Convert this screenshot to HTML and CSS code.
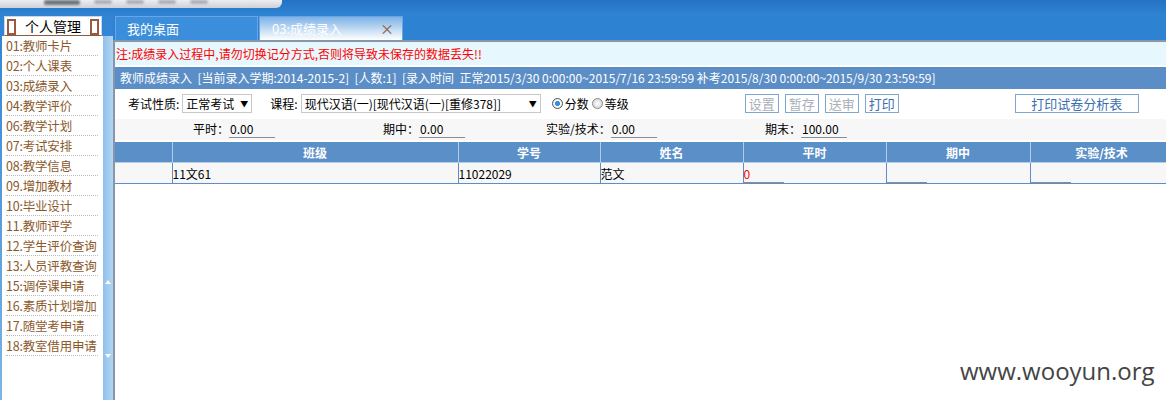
FILE: index.html
```html
<!DOCTYPE html>
<html>
<head>
<meta charset="utf-8">
<title>教师成绩录入</title>
<link rel="stylesheet" href="styles.css">
</head>
<body>
<div class="top">
  <div class="logo"><span class="blob b1"></span><span class="blob b2"></span><span class="blob b3"></span><span class="blob b4"></span><span class="blob b5"></span></div>
</div>
<div class="frame">
  <div class="side">
    <div class="side-head">
      <span class="orn orn-l"></span>个人管理<span class="orn orn-r"></span>
    </div>
    <div class="side-body">
      <ul class="menu">
        <li>01:教师卡片</li>
        <li>02:个人课表</li>
        <li>03:成绩录入</li>
        <li>04:教学评价</li>
        <li>06:教学计划</li>
        <li>07:考试安排</li>
        <li>08:教学信息</li>
        <li>09.增加教材</li>
        <li>10:毕业设计</li>
        <li>11.教师评学</li>
        <li>12.学生评价查询</li>
        <li>13:人员评教查询</li>
        <li>15:调停课申请</li>
        <li>16.素质计划增加</li>
        <li>17.随堂考申请</li>
        <li>18:教室借用申请</li>
      </ul>
      <div class="scroll">
        <span class="arr arr-up"></span>
        <span class="arr arr-down"></span>
      </div>
    </div>
  </div>
  <div class="main">
    <div class="tabs">
      <div class="tab">我的桌面</div>
      <div class="tab tab-on"><span>03:成绩录入</span><span class="close">×</span></div>
    </div>
    <div class="panel">
      <div class="notice">注:成绩录入过程中,请勿切换记分方式,否则将导致未保存的数据丢失!!</div>
      <div class="bar">教师成绩录入&nbsp; [当前录入学期:2014-2015-2]&nbsp; [人数:1]&nbsp; [录入时间&nbsp; 正常2015/3/30 0:00:00~2015/7/16 23:59:59 补考2015/8/30 0:00:00~2015/9/30 23:59:59]</div>
      <div class="form">
        <span class="lbl">考试性质:</span>
        <span class="sel sel-kind"><span class="sel-txt">正常考试</span><span class="caret">▼</span></span>
        <span class="lbl lbl-course">课程:</span>
        <span class="sel sel-course"><span class="sel-txt">现代汉语(一)[现代汉语(一)[重修378]]</span><span class="caret">▼</span></span>
        <span class="radio radio-on"></span><span class="rtxt">分数</span>
        <span class="radio"></span><span class="rtxt">等级</span>
        <span class="btns">
          <span class="btn btn-off">设置</span>
          <span class="btn btn-off">暂存</span>
          <span class="btn btn-off">送审</span>
          <span class="btn">打印</span>
        </span>
        <span class="btn btn-wide">打印试卷分析表</span>
      </div>
      <div class="weights">
        <span class="w w1">平时：<span class="val">0.00</span></span>
        <span class="w w2">期中：<span class="val">0.00</span></span>
        <span class="w w3">实验/技术：<span class="val">0.00</span></span>
        <span class="w w4">期末：<span class="val">100.00</span></span>
      </div>
      <table class="grid" cellspacing="0">
        <colgroup>
          <col class="c0"><col class="c1"><col class="c2"><col class="c3"><col class="c4"><col class="c5"><col class="c6">
        </colgroup>
        <tr>
          <th></th>
          <th>班级</th>
          <th>学号</th>
          <th>姓名</th>
          <th>平时</th>
          <th>期中</th>
          <th>实验/技术</th>
        </tr>
        <tr>
          <td></td>
          <td>11文61</td>
          <td>11022029</td>
          <td>范文</td>
          <td><span class="score red">0</span></td>
          <td><span class="score"></span></td>
          <td><span class="score"></span></td>
        </tr>
      </table>
    </div>
  </div>
</div>
<div class="mark">www.wooyun.org</div>
</body>
</html>
```
FILE: styles.css
```css
body{margin:0;padding:0;background:#2d82d2;font:12px "Noto Sans CJK SC","DejaVu Sans",sans-serif;color:#000;height:400px;overflow:hidden;}
ul{margin:0;padding:0;list-style:none;}

.top{height:16px;background:linear-gradient(#2572c4,#2f84d4);}
.logo{width:282px;height:8px;background:linear-gradient(#eceef1,#cdd0d6);border-radius:0 0 6px 0;display:flex;gap:14px;padding-left:124px;box-sizing:border-box;}
.blob{width:18px;height:4px;background:#aab0ba;border-radius:2px;filter:blur(1px);}
.b1{margin-left:-80px;width:36px;height:5px;background:#707780;}

.frame{display:flex;height:384px;}
.side{width:113px;flex:none;display:flex;flex-direction:column;background:linear-gradient(#2f84d4,#7fb4e6);}
.side-head{margin:0 11px 0 4px;height:18px;line-height:18px;background:#fff;border:1px solid #c7d8ea;border-bottom:1px solid #8a5a3a;text-align:center;font-size:14px;position:relative;}
.orn{position:absolute;top:2px;width:5px;height:12px;border:2px solid #9a5a40;}
.orn-l{left:2px;}
.orn-r{right:2px;}
.side-body{flex:1;display:flex;}
.menu{width:101px;margin-left:2px;background:#fff;}
.menu li{height:19px;line-height:19px;margin:0 5px 0 4px;border-bottom:1px dotted #bbb;color:#8b5a2b;font-size:12.5px;white-space:nowrap;letter-spacing:-0.2px;}
.scroll{width:10px;position:relative;background:linear-gradient(90deg,#8fc0ec,#b4d5f2);}
.arr{position:absolute;left:2px;width:0;height:0;border-left:3px solid transparent;border-right:3px solid transparent;}
.arr-up{top:244px;border-bottom:4px solid #fff;}
.arr-down{top:318px;border-top:4px solid #fff;}

.main{flex:1;display:flex;flex-direction:column;overflow:hidden;}
.tabs{height:24px;display:flex;gap:1px;padding-left:2px;}
.tab{width:130px;height:23px;line-height:23px;padding-left:11px;border:1px solid #69a5e6;border-bottom:none;background:#3b8edc;color:#fff;font-size:13px;}
.tab-on{display:flex;justify-content:space-between;padding:0 8px 0 12px;width:122px;background:linear-gradient(#7db2e6,#fff);}
.close{color:#8b5a3a;font-size:14px;}
.panel{flex:1;background:#fff;border-top:2px solid #8796a8;border-left:2px solid #8796a8;}
.notice{height:23px;line-height:23px;background:#e6f7fd;color:#f00;padding-left:1px;}
.bar{height:22px;line-height:22px;margin-top:2px;background:#5b8ec6;color:#fff;padding-left:5px;white-space:nowrap;}
.form{height:29px;display:flex;align-items:center;padding-left:13px;white-space:nowrap;}
.lbl{margin-right:3px;}
.lbl-course{margin-left:18px;}
.sel{display:flex;align-items:center;height:17px;border:1px solid #c8c8c8;background:#fff;padding:0 3px;overflow:hidden;}
.sel-kind{width:62px;}
.sel-course{width:232px;}
.sel-txt{flex:1;overflow:hidden;white-space:nowrap;}
.caret{font-size:8px;margin-left:4px;}
.radio{width:9px;height:9px;border-radius:50%;border:1px solid #888;background:radial-gradient(#fff,#ccc);margin:0 2px 0 11px;}
.radio-on{background:radial-gradient(#3a8ee0 35%,#fff 45%,#ccc);border-color:#555;}
.rtxt + .radio{margin-left:3px;}
.btns{display:flex;gap:6px;margin-left:116px;}
.btn{height:17px;line-height:17px;padding:0 3px;border:1px solid #7fa6cf;color:#3a70b0;font-size:13px;}
.btn-off{color:#a8b0bc;}
.btn-wide{margin-left:116px;width:116px;text-align:center;}
.weights{height:21px;line-height:20px;background:#f7f7f7;margin-top:1px;position:relative;white-space:nowrap;}
.w{position:absolute;top:0;}
.w1{left:78px;}
.w2{left:268px;}
.w3{left:431px;}
.w4{left:650px;}
.val{display:inline-block;width:45px;border-bottom:1px solid #8c8c8c;line-height:16px;padding-left:1px;}
.grid{border-collapse:collapse;table-layout:fixed;width:1058px;margin-top:2px;}
.grid th{height:20px;padding:0;background:#5b8fc7;color:#fff;font-weight:bold;border:1px solid #b3cde8;border-top:none;}
.grid td{height:20px;padding:0;background:#f7f7f7;border:1px solid #5b8fc7;border-top:none;white-space:nowrap;vertical-align:bottom;line-height:18px;}
.grid tr td:first-child,.grid tr th:first-child{border-left:none;}
.c0{width:57px;}
.c1{width:286px;}
.c2{width:142px;}
.c3{width:143px;}
.c4{width:143px;}
.c5{width:144px;}
.c6{width:143px;}
.score{display:inline-block;width:40px;height:17px;border-bottom:1px solid #8c8c8c;vertical-align:bottom;}
.red{color:#f00;}

.mark{position:absolute;left:960px;top:354px;font:24px "Open Sans",sans-serif;color:#444;}
```
